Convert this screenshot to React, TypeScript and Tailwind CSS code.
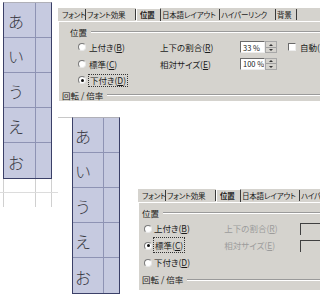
import React from "react";

const F = "font-['Noto_Sans_CJK_JP','Noto_Sans',sans-serif] [font-feature-settings:'palt']";

function Radio({ on }: { on?: boolean }) {
  return (
    <div className="w-[8px] h-[8px] shrink-0 rounded-full bg-white border border-t-[#7a7a7a] border-l-[#7a7a7a] border-r-[#e8e8e8] border-b-[#e8e8e8] flex items-center justify-center">
      {on ? <div className="w-[3px] h-[3px] rounded-full bg-[#111]" /> : null}
    </div>
  );
}

function Tab({ w, children, sel }: { w: string; children: React.ReactNode; sel?: boolean }) {
  return (
    <div
      className={
        "h-[11px] flex items-center whitespace-nowrap overflow-hidden border-r border-[#3a3a3a] shrink-0 " +
        w +
        (sel ? " font-bold pl-[3px] border-l border-l-white border-t border-t-white h-[13px] self-end" : " pl-[1px]")
      }
    >
      {children}
    </div>
  );
}

function Tabs() {
  return (
    <div className="flex items-center h-[13px] pl-[3px] text-[7.5px] tracking-[-0.2px] leading-none text-[#1b1b1b]">
      <Tab w="w-[25px]">フォント</Tab>
      <Tab w="w-[50px]">フォント効果</Tab>
      <Tab w="w-[25px]" sel>
        位置
      </Tab>
      <Tab w="w-[59px]">日本語レイアウト</Tab>
      <Tab w="w-[56px]">ハイパーリンク</Tab>
      <Tab w="w-[21px]">背景</Tab>
    </div>
  );
}

function Header({ label, pad, h }: { label: string; pad: string; h: string }) {
  return (
    <div className={"flex items-center " + h + " " + pad}>
      <span className="whitespace-nowrap">{label}</span>
      <div className="flex-1 ml-[4px] h-[2px] border-t border-[#9a9a9a] border-b border-b-white" />
    </div>
  );
}

function Spin({ v }: { v: string }) {
  return (
    <div className="flex h-[12px] w-[37px] shrink-0">
      <div className="w-[25px] h-full bg-white border border-t-[#6a6a6a] border-l-[#6a6a6a] border-r-[#eee] border-b-[#eee] flex items-center pl-[2px] text-[7.5px] whitespace-nowrap overflow-hidden">
        {v}
      </div>
      <div className="w-[12px] h-full flex flex-col border border-[#a8a8a8] bg-[#d5d3ce]">
        <div className="flex-1 flex items-center justify-center border-b border-[#a0a0a0]">
          <div className="w-0 h-0 border-l-[2px] border-r-[2px] border-b-[2px] border-l-transparent border-r-transparent border-b-[#333]" />
        </div>
        <div className="flex-1 flex items-center justify-center">
          <div className="w-0 h-0 border-l-[2px] border-r-[2px] border-t-[2px] border-l-transparent border-r-transparent border-t-[#333]" />
        </div>
      </div>
    </div>
  );
}

function Dialog1() {
  return (
    <div className={"w-[262px] h-[93px] bg-[#d5d3ce] text-[8.5px] leading-none text-[#1b1b1b] " + F}>
      <Tabs />
      <div className="h-[80px] border-t border-l border-white pt-[3px]">
        <Header label="位置" pad="pl-[11px]" h="h-[14px]" />
        <div className="flex items-center h-[16.5px] pl-[19px]">
          <Radio />
          <div className="ml-[3px] w-[71px] whitespace-nowrap">上付き(<span className="underline">B</span>)</div>
          <div className="w-[80px] whitespace-nowrap">上下の割合(<span className="underline">R</span>)</div>
          <Spin v="33 %" />
          <div className="ml-[11px] w-[8px] h-[8px] bg-white border border-t-[#6a6a6a] border-l-[#6a6a6a] border-r-[#eee] border-b-[#eee] shrink-0" />
          <div className="ml-[4px] whitespace-nowrap">自動(</div>
        </div>
        <div className="flex items-center h-[16.5px] pl-[19px]">
          <Radio />
          <div className="ml-[3px] w-[71px] whitespace-nowrap">標準(<span className="underline">C</span>)</div>
          <div className="w-[80px] whitespace-nowrap">相対サイズ(<span className="underline">E</span>)</div>
          <Spin v="100 %" />
        </div>
        <div className="flex items-center h-[16.5px] pl-[19px]">
          <Radio on />
          <div className="ml-[2px] px-[1px] py-[1px] border border-dotted border-[#333] whitespace-nowrap">
            下付き(<span className="underline">D</span>)
          </div>
        </div>
        <Header label="回転 / 倍率" pad="pl-[3px]" h="h-[13.5px]" />
      </div>
    </div>
  );
}

function Dialog2() {
  return (
    <div className={"w-[182px] h-[101px] bg-[#d5d3ce] text-[8.5px] leading-none text-[#1b1b1b] overflow-hidden " + F}>
      <Tabs />
      <div className="h-[88px] border-t border-l border-white pt-[3px]">
        <Header label="位置" pad="pl-[3px]" h="h-[14px]" />
        <div className="flex items-center h-[17px] pl-[5px]">
          <Radio />
          <div className="ml-[2px] w-[76px] whitespace-nowrap">上付き(<span className="underline">B</span>)</div>
          <div className="w-[82px] whitespace-nowrap text-[#9c9c9c]">上下の割合(<span className="underline">R</span>)</div>
          <div className="h-[12px] w-[20px] border-l border-t border-[#404040] shrink-0" />
        </div>
        <div className="flex items-center h-[17px] pl-[5px]">
          <Radio on />
          <div className="ml-[1px] w-[77px]">
            <span className="px-[1px] py-[1px] border border-dotted border-[#333] whitespace-nowrap">
              標準(<span className="underline">C</span>)
            </span>
          </div>
          <div className="w-[82px] whitespace-nowrap text-[#9c9c9c]">相対サイズ(<span className="underline">E</span>)</div>
          <div className="h-[12px] w-[20px] border-l border-t border-[#404040] shrink-0" />
        </div>
        <div className="flex items-center h-[17px] pl-[5px]">
          <Radio />
          <div className="ml-[2px] whitespace-nowrap">下付き(<span className="underline">D</span>)</div>
        </div>
        <Header label="回転 / 倍率" pad="pl-[3px]" h="h-[17px]" />
      </div>
    </div>
  );
}

const KANA = ["あ", "い", "う", "え", "お"];

function KanaTable({ left, right, pad }: { left: string; right: string; pad: string }) {
  return (
    <div className="flex flex-col bg-[#c6cae0] border-l border-r border-b border-[#3b4068] border-t border-t-[#b0b0b8]">
      {KANA.map((k, i) => (
        <div key={k} className={"flex h-[35px] " + (i < 4 ? "border-b border-[#8e93b4]" : "")}>
          <div className={"flex items-center border-r border-[#8e93b4] " + left + " " + pad}>
            <span className="text-[16px] leading-none font-light text-[#3a3a44] font-['Noto_Sans_CJK_JP',sans-serif] mt-[2px]">
              {k}
            </span>
          </div>
          <div className={right} />
        </div>
      ))}
    </div>
  );
}

export default function App() {
  return (
    <div className="w-[320px] h-[297px] bg-white overflow-hidden flex">
      <div className="w-[58px] shrink-0 pt-[2px] pl-[3px] flex flex-col">
        <div className="w-[49px]">
          <KanaTable left="w-[32px]" right="flex-1" pad="pl-[4px]" />
        </div>
        <div className="relative w-[55px] h-[28px]">
          <div className="absolute left-0 top-0 w-px h-full bg-[#d0d0d0]" />
          <div className="absolute left-[32px] top-0 w-px h-full bg-[#d0d0d0]" />
          <div className="absolute left-[48px] top-0 w-px h-full bg-[#d0d0d0]" />
          <div className="absolute left-[-3px] top-[13px] w-[58px] h-px bg-[#dcdcdc]" />
        </div>
      </div>
      <div className="flex-1 flex flex-col pt-[8px]">
        <Dialog1 />
        <div className="flex mt-[16px]">
          <div className="flex flex-col w-[62px] shrink-0">
            <div className="h-px w-[62px] bg-[#c8c8c8]" />
            <div className="ml-[14px] w-[48px] -mt-px">
              <KanaTable left="w-[31px]" right="flex-1" pad="pl-[2px]" />
            </div>
          </div>
          <div className="ml-[18px] mt-[72px]">
            <Dialog2 />
          </div>
        </div>
      </div>
    </div>
  );
}
